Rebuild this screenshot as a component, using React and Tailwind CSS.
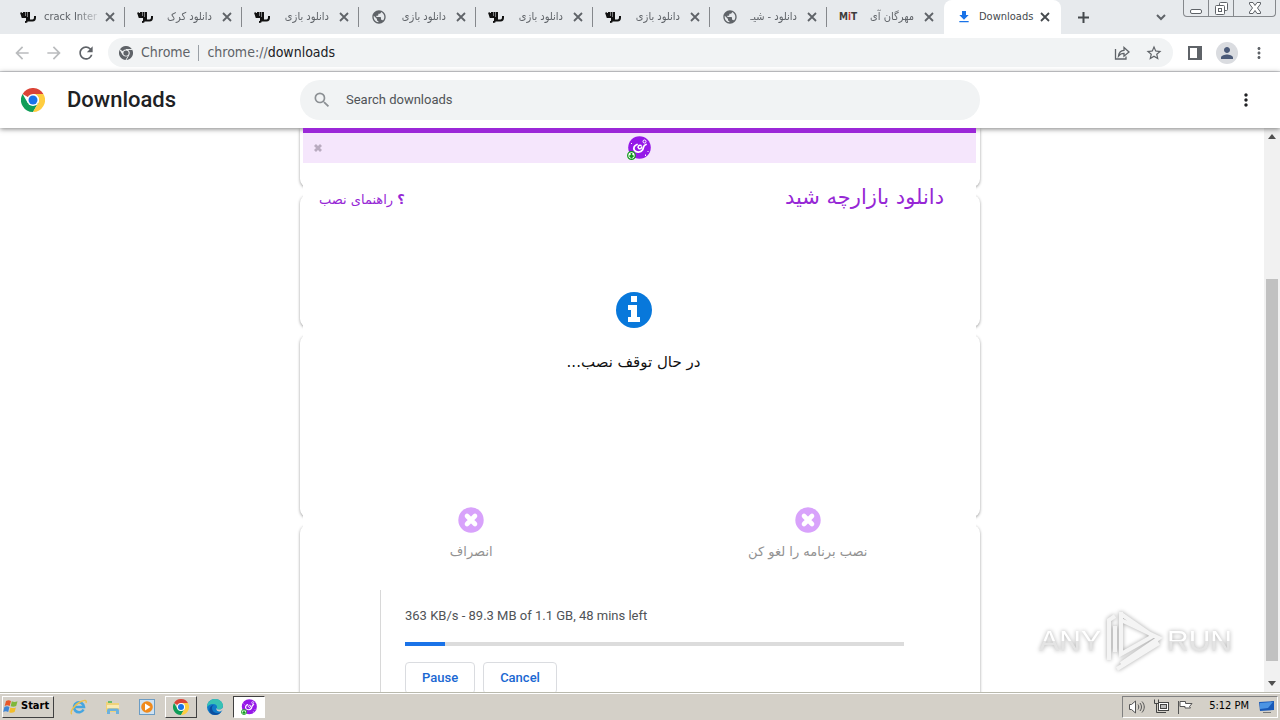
import React, { useState } from 'react';
import {
  MdArrowBack, MdArrowForward, MdFileDownload,
  MdMoreVert, MdPerson, MdPublic, MdRefresh, MdSearch, MdStarBorder
} from 'react-icons/md';

const TABS = [
  { id: 1, title: 'crack Inter', icon: 'site' },
  { id: 2, title: 'دانلود کرک', icon: 'site', rtl: true },
  { id: 3, title: 'دانلود بازی', icon: 'site', rtl: true },
  { id: 4, title: 'دانلود بازی', icon: 'globe', rtl: true },
  { id: 5, title: 'دانلود بازی', icon: 'site', rtl: true },
  { id: 6, title: 'دانلود بازی', icon: 'site', rtl: true },
  { id: 7, title: 'دانلود - شیـ', icon: 'globe', rtl: true },
  { id: 8, title: 'مهرگان آی', icon: 'mit', rtl: true },
];

function SiteIcon() {
  return (
    <svg viewBox="0 0 16 12" className="h-3 w-4" fill="none" stroke="#111" strokeWidth="2">
      <path d="M1 1.500l1.500 4.500h4V1M4 1v4M1.500 3h3M9 1v9.500" />
      <path d="M7 6v3.500c0 1-.6 1.500-2 1.500M10 9.500h2.500c1.600 0 2.500-1.200 2.500-3V5" />
    </svg>
  );
}

function Favicon({ type }) {
  if (type === 'globe') return <MdPublic size={16} className="text-[#5f6368]" />;
  if (type === 'mit') {
    return (
      <span className="w-4 text-[10px] leading-4 font-bold text-[#3c3c3c]">
        M<span className="text-[#d0352b]">i</span>T
      </span>
    );
  }
  return <SiteIcon />;
}

function CrossIcon() {
  return (
    <svg viewBox="0 0 14 14" className="h-3.5 w-3.5" fill="none" stroke="currentColor" strokeWidth="1.800">
      <path d="M3 3l8 8M11 3l-8 8" />
    </svg>
  );
}

function ChromeLogo({ className, mono }) {
  const c = mono ? ['#5f6368', '#5f6368', '#5f6368', '#5f6368'] : ['#db4437', '#0f9d58', '#ffcd40', '#1a73e8'];
  return (
    <svg viewBox="0 0 48 48" className={className}>
      <path d="M24 24L3.200 12A24 24 0 0 1 44.800 12L24 12z" fill={c[0]} />
      <path d="M3.200 12A24 24 0 0 0 24 48L34.400 30L24 24L13.600 30z" fill={c[1]} />
      <path d="M44.800 12A24 24 0 0 1 24 48L34.400 30A12 12 0 0 0 24 12z" fill={c[2]} />
      {mono && <path d="M24 12H45M13.600 30L3.200 12M34.400 30L24 48" stroke="#f1f3f4" strokeWidth="3" />}
      <circle cx="24" cy="24" r="12" fill={mono ? '#f1f3f4' : '#fff'} />
      <circle cx="24" cy="24" r="9" fill={c[3]} />
    </svg>
  );
}

function InstallerLogo({ className }) {
  return (
    <svg viewBox="0 0 24 24" className={className}>
      <circle cx="12.500" cy="11.500" r="11.300" fill="#9518e8" />
      <path d="M10 8.500c-2.800 1-4 3.500-2.500 5.800 1.800 2.600 6.200 2.400 8-.3 1.600-2.500.2-4.600 3.500-5.500" fill="none" stroke="#fff" strokeWidth="1.800" strokeLinecap="round" />
      <path d="M14 9.500c-2.500-.8-3.800 1.500-2.300 2.800 1 .8 2.800.4 3-1.300" fill="none" stroke="#fff" strokeWidth="1.500" strokeLinecap="round" />
      <circle cx="17.500" cy="5.500" r="1.500" fill="none" stroke="#fff" />
      <path d="M4 7l1 1M18.500 18.500v1.500M21 15v1" stroke="#fff" />
      <circle cx="4.500" cy="19.500" r="3.800" fill="#fff" stroke="#119c1b" strokeWidth="1.300" />
      <path d="M4.500 17v5M2.500 19.500l2 2 2-2" fill="none" stroke="#119c1b" strokeWidth="1.700" />
    </svg>
  );
}

function InfoIcon() {
  return (
    <svg viewBox="0 0 36 36" className="h-9 w-9">
      <circle cx="18" cy="18" r="18" fill="#0878db" />
      <path d="M15 4h6v6h-6zM12 13h9v12h3v5H12v-5h3v-7h-3z" fill="#fff" />
    </svg>
  );
}

function CancelIcon() {
  return (
    <svg viewBox="0 0 26 26" className="h-[26px] w-[26px]">
      <circle cx="13" cy="13" r="12.700" fill="#d8a2fb" />
      <path d="M9 9l8 8M17 9l-8 8" stroke="#fff" strokeWidth="4.600" strokeLinecap="round" />
    </svg>
  );
}

function WindowButtons() {
  return (
    <div className="mr-1 flex h-[17px] w-[93px] self-start rounded-b-[4px] border border-t-0 border-[#85888c] text-[#5f6368]">
      <button aria-label="Minimize" className="flex w-[25px] items-center justify-center border-r border-[#85888c]">
        <svg viewBox="0 0 12 12" className="mt-1 h-3 w-3"><rect x=".5" y="5.500" width="11" height="4" rx="1.500" fill="#fff" stroke="currentColor" /></svg>
      </button>
      <button aria-label="Restore" className="flex w-[25px] items-center justify-center border-r border-[#85888c]">
        <svg viewBox="0 0 13 13" className="h-[13px] w-[13px]" fill="#fff" stroke="currentColor">
          <rect x="4.500" y=".5" width="8" height="8" rx="1" />
          <rect x=".5" y="3.500" width="9" height="9" rx="1" />
          <rect x="3.500" y="6.500" width="3" height="3" />
        </svg>
      </button>
      <button aria-label="Close window" className="flex flex-1 items-center justify-center">
        <svg viewBox="0 0 12 12" className="h-3 w-3" fill="#fff" stroke="currentColor">
          <path d="M.5.500h3.500L6 3.500 8 .5h3.500v1.500L8.500 6l3 4v1.500H8L6 8.500 4 11.500H.5V10l3-4-3-4z" />
        </svg>
      </button>
    </div>
  );
}

function TabStrip() {
  return (
    <div className="flex h-[34px] shrink-0 items-center bg-[#e7eaed] pl-2 font-['DejaVu_Sans_Condensed','DejaVu_Sans',sans-serif]">
      {TABS.map((t, i) => (
        <div key={t.id} className="flex h-5 w-[117px] min-w-0 items-center pl-3">
          <Favicon type={t.icon} />
          <span
            dir={t.rtl ? 'rtl' : 'ltr'}
            className={`w-[67px] shrink-0 px-2 text-[11px] leading-5 whitespace-nowrap text-[#5f6368] ${
              t.rtl ? '[mask-image:linear-gradient(to_left,black_75%,transparent)]' : '[mask-image:linear-gradient(to_right,black_60%,transparent)]'
            }`}
          >
            {t.title}
          </span>
          <button aria-label="Close tab" className="shrink-0 text-[#5f6368]"><CrossIcon /></button>
          {i < TABS.length - 1 && <span className="ml-auto h-5 w-px bg-[#85888c]" />}
        </div>
      ))}
      <div className="flex h-full w-[117px] items-center rounded-t-lg bg-white pr-[9px] pl-3">
        <MdFileDownload size={16} className="text-[#1a73e8]" />
        <span className="ml-[7px] text-[11px] leading-5 whitespace-nowrap text-[#45494d]">Downloads</span>
        <button aria-label="Close tab" className="ml-auto text-[#45494d]"><CrossIcon /></button>
      </div>
      <button aria-label="New tab" className="ml-4 text-[#45494d]">
        <svg viewBox="0 0 13 13" className="h-[13px] w-[13px]" stroke="currentColor" strokeWidth="2"><path d="M6.500 1v11M1 6.500h11" /></svg>
      </button>
      <button aria-label="Search tabs" className="mr-4 ml-auto text-[#5f6368]">
        <svg viewBox="0 0 12 12" className="h-3 w-3" fill="none" stroke="currentColor" strokeWidth="2"><path d="M2 4l4 4 4-4" /></svg>
      </button>
      <WindowButtons />
    </div>
  );
}

function Toolbar() {
  return (
    <div className="flex h-[38px] shrink-0 items-center border-b border-[#d5d7da] bg-white pr-3 pl-3 text-[#5f6368]">
      <div className="flex items-center gap-3">
        <button aria-label="Back" className="text-[#babcbe]"><MdArrowBack size={20} /></button>
        <button aria-label="Forward" className="text-[#babcbe]"><MdArrowForward size={20} /></button>
        <button aria-label="Reload"><MdRefresh size={20} /></button>
      </div>
      <div className="ml-3 flex h-[29px] flex-1 items-center rounded-full bg-[#f1f3f4] pr-2.5 pl-[11px] font-['DejaVu_Sans_Condensed','DejaVu_Sans',sans-serif] text-[14px]">
        <ChromeLogo mono className="h-3.5 w-3.5" />
        <span className="ml-2">Chrome</span>
        <span className="mx-2 h-4 w-px bg-[#9aa0a6]" />
        <span>chrome://<span className="text-[#202124]">downloads</span></span>
        <button aria-label="Share" className="ml-auto">
          <svg viewBox="0 0 16 16" className="h-4 w-4" fill="none" stroke="currentColor" strokeWidth="1.300">
            <path d="M1.500 4v10h10.500v-2.500" />
            <path d="M4.500 11c.3-3.500 2.300-5.500 5.500-5.700V2.500L15 7l-5 4.200V8.400C7.500 8.400 5.800 9.200 4.500 11z" />
          </svg>
        </button>
        <button aria-label="Bookmark" className="ml-[15px]"><MdStarBorder size={18} /></button>
      </div>
      <button aria-label="Side panel" className="ml-[15px]">
        <svg viewBox="0 0 14 14" className="h-3.5 w-3.5"><path d="M1 1h12v12H1z" fill="none" stroke="currentColor" strokeWidth="2" /><path d="M9 0h5v14H9z" fill="currentColor" /></svg>
      </button>
      <button aria-label="Profile" className="ml-3.5 flex h-[22px] w-[22px] items-center justify-center rounded-full bg-[#dadce0] text-[#4b5a78]"><MdPerson size={18} /></button>
      <button aria-label="Menu" className="ml-3"><MdMoreVert size={18} /></button>
    </div>
  );
}

function PageHeader() {
  const [query, setQuery] = useState('');
  return (
    <header className="relative z-10 grid h-14 shrink-0 grid-cols-[1fr_680px_1fr] items-center bg-white shadow-[0_1px_5px_rgba(0,0,0,0.5)]">
      <div className="flex items-center gap-[22px] pl-[21px]">
        <ChromeLogo className="h-6 w-6" />
        <h1 className="font-[Roboto,sans-serif] text-[22px] leading-6 font-medium text-[#202124]">Downloads</h1>
      </div>
      <label className="flex h-10 items-center rounded-full bg-[#f1f3f4] pl-3">
        <MdSearch size={20} className="text-[#8c9094]" />
        <input
          value={query}
          onChange={(e) => setQuery(e.target.value)}
          placeholder="Search downloads"
          aria-label="Search downloads"
          className="ml-3.5 flex-1 bg-transparent font-[Roboto,sans-serif] text-[13px] outline-none placeholder:text-[#505357]"
        />
      </label>
      <button aria-label="More actions" className="mr-6 justify-self-end text-[#202124]"><MdMoreVert size={20} /></button>
    </header>
  );
}

function Installer() {
  return (
    <section className="absolute top-0 left-[3px] z-20 h-[462px] w-[673px] bg-white font-['DejaVu_Sans',sans-serif]">
      <div className="h-[5px] bg-[#9b27d8]" />
      <div className="grid h-[30px] grid-cols-3 items-center bg-[#f5e6fc]">
        <button aria-label="Close" className="ml-2.5 justify-self-start text-[#b9abc0]">
          <svg viewBox="0 0 10 10" className="h-2.5 w-2.5"><path d="M2 2l6 6M8 2L2 8" stroke="currentColor" strokeWidth="2.800" /></svg>
        </button>
        <InstallerLogo className="h-6 w-6 justify-self-center" />
      </div>
      <div dir="rtl" className="flex h-[70px] items-center justify-between pr-8 pl-4 text-[#9627d5]">
        <h2 className="text-[21px]">دانلود بازارچه شید</h2>
        <a href="#help" className="mt-1 text-[13px]"><b>؟</b> راهنمای نصب</a>
      </div>
      <div className="flex h-[274px] flex-col items-center pt-[59px] pr-3">
        <InfoIcon />
        <p dir="rtl" className="mt-5 text-[15px] leading-7 text-[#111]">در حال توقف نصب...</p>
      </div>
      <div className="grid grid-cols-2 text-[13px] leading-[22px] text-[#929292]">
        <button className="flex flex-col items-center gap-2">
          <CancelIcon />
          انصراف
        </button>
        <button className="flex flex-col items-center gap-2">
          <CancelIcon />
          نصب برنامه را لغو کن
        </button>
      </div>
    </section>
  );
}

function DownloadList() {
  const card = 'rounded-lg bg-white shadow-[0_1px_3px_rgba(0,0,0,0.4)]';
  return (
    <div className="relative flex w-[680px] flex-col gap-2">
      <div className={`h-[59px] rounded-t-none ${card}`} />
      <div className={`h-[132px] ${card}`} />
      <div className={`h-[182px] ${card}`} />
      <article className={`h-[230px] pl-20 ${card}`}>
        <div className="h-full border-l border-[#d8d8d8] pt-[81px] pr-[76px] pl-6 font-[Roboto,sans-serif] text-[13px]">
          <p className="leading-5 text-[#505357]">363 KB/s - 89.3 MB of 1.1 GB, 48 mins left</p>
          <div role="progressbar" aria-valuenow={8} className="mt-4 h-1 bg-[#dcdcdc]">
            <div className="h-full w-[8%] bg-[#1a73e8]" />
          </div>
          <div className="mt-4 flex gap-2 font-medium text-[#1967d2]">
            <button className="h-8 rounded border border-[#dadce0] px-4">Pause</button>
            <button className="h-8 rounded border border-[#dadce0] px-4">Cancel</button>
          </div>
        </div>
      </article>
      <Installer />
    </div>
  );
}

function Scrollbar() {
  return (
    <div className="flex w-4 shrink-0 flex-col items-center bg-[#f1f1f1] py-1.5 text-[#505050]">
      <svg viewBox="0 0 8 5" className="h-[5px] w-2"><path d="M0 5l4-5 4 5z" fill="currentColor" /></svg>
      <div className="mt-[140px] mb-5 w-3 flex-1 bg-[#c1c1c1]" />
      <svg viewBox="0 0 8 5" className="h-[5px] w-2"><path d="M0 0l4 5 4-5z" fill="currentColor" /></svg>
    </div>
  );
}

function Watermark() {
  const text = "bg-linear-to-b from-white from-50% to-[#e4e4e4] to-50% bg-clip-text font-['Liberation_Sans',sans-serif] text-[30px] leading-10 text-transparent";
  return (
    <div className="absolute right-12 bottom-5 flex items-center gap-1 drop-shadow-[0_0_2px_rgba(0,0,0,0.35)]">
      <span className={text}>ANY</span>
      <svg viewBox="0 0 58 62" className="h-[62px] w-[58px]" fill="none" stroke="#f4f4f4" strokeWidth="4">
        <path d="M4 50V10l6-4M10 42V16M16 2v42l32-18L16 4M16 10l38 18-38 26M12 59l42-26" />
      </svg>
      <span className={text}>RUN</span>
    </div>
  );
}

function WindowsFlag() {
  return (
    <svg viewBox="0 0 16 15" className="h-[15px] w-4">
      <path d="M3 2c2-1.200 3.500-1 5 0L6.700 7C5 6 3.500 6 1.700 7z" fill="#e8582a" />
      <path d="M8.800 2.300c2 1 3.500 1 5.700 0L13.200 7c-2 1-3.700 1-5.500.3z" fill="#7fb83a" />
      <path d="M1.400 8c2-1 3.500-.8 5 0L5.200 13c-1.700-1-3.200-1-5 0z" fill="#3f86d6" />
      <path d="M7.400 8.400c2 .9 3.500.9 5.500 0L11.600 13c-2 1-3.700 1-5.400.2z" fill="#f2bd2b" />
    </svg>
  );
}

function EdgeIcon() {
  return (
    <svg viewBox="0 0 16 16" className="h-4 w-4">
      <circle cx="8" cy="8" r="8" fill="#0f7bc9" />
      <path d="M0 8C0 3 4 0 8 0c5 0 8 3.500 8 6.500 0 2.500-2 4-4 4-1.500 0-2.500-.6-2-1.600C10.500 6.500 8.500 5 6 5 3 5 1 6.500 0 8z" fill="#37c2b4" />
      <path d="M10 8.900c-.5 1 .5 1.600 2 1.600 1.700 0 3.200-.9 3.800-2.300L16 11l-3 1.500c-2 .3-4-1-3.600-3z" fill="#d4d0c8" />
      <path d="M5 9c0 3 2.500 5 5.500 5 1.500 0 3-.5 4-1.500C13 15 10.500 16 8 16c-4 0-6-3-5.500-6C3 7.500 5 6 7 6 5.500 6.500 5 8 5 9z" fill="#0c4fa0" />
    </svg>
  );
}

function Taskbar() {
  return (
    <footer className="flex h-7 shrink-0 items-center border-t border-[#b9b9ad] bg-[#d4d0c8] px-0.5 font-['DejaVu_Sans_Condensed','DejaVu_Sans',sans-serif] shadow-[inset_0_1px_0_#fff]">
      <button className="flex h-[22px] w-[52px] items-center gap-0.5 border border-t-white border-r-[#404040] border-b-[#404040] border-l-white text-[11px] font-bold text-black">
        <WindowsFlag />
        Start
      </button>
      <div className="ml-2 flex items-center">
        <button aria-label="Internet Explorer" className="flex w-[34px] justify-center">
          <svg viewBox="0 0 18 16" className="h-4 w-[18px]" fill="none">
            <path d="M13.500 10.500A5 5 0 1 1 14 8H5" stroke="#45a5e0" strokeWidth="2.600" />
            <path d="M2 15c-3-1 2-9 8-12 5-2.500 7-2 6 1" stroke="#ecc04c" strokeWidth="1.400" />
          </svg>
        </button>
        <button aria-label="Explorer" className="flex w-[34px] justify-center">
          <svg viewBox="0 0 16 16" className="h-4 w-4">
            <path d="M1 3h5l1 1h7v9H1z" fill="#efd27a" />
            <path d="M3 2h4v2H3z" fill="#6dbb6a" />
            <path d="M2 6h12v3H2z" fill="#f9eab2" />
            <path d="M2 15v-3c0-2 1-2.500 3-2.500h6c2 0 3 .5 3 2.500v3h-3v-3H5v3z" fill="#6db1dd" />
          </svg>
        </button>
        <button aria-label="Media Player" className="flex w-[34px] justify-center">
          <svg viewBox="0 0 16 16" className="h-4 w-4">
            <rect x=".5" y=".5" width="15" height="15" fill="#cfe2f2" stroke="#6b9cc4" />
            <circle cx="8" cy="8" r="5.800" fill="#f08a1c" />
            <path d="M6 4.500v7L11.500 8z" fill="#fff" />
          </svg>
        </button>
        <button aria-label="Chrome" className="mx-px flex h-[22px] w-8 items-center justify-center border border-t-white border-r-[#404040] border-b-[#404040] border-l-white">
          <ChromeLogo className="h-4 w-4" />
        </button>
        <button aria-label="Edge" className="flex w-[34px] justify-center"><EdgeIcon /></button>
        <button aria-label="Installer" className="mx-px flex h-[22px] w-8 items-center justify-center border border-t-[#404040] border-r-white border-b-white border-l-[#404040] bg-white">
          <InstallerLogo className="h-4 w-4" />
        </button>
      </div>
      <div className="ml-auto flex h-[22px] items-center gap-2 border border-t-[#808080] border-r-white border-b-white border-l-[#808080] pr-0.5 pl-1.5 text-[11px] text-black">
        <svg viewBox="0 0 16 14" className="h-3.5 w-4" fill="#fff" stroke="#555">
          <path d="M.5 4.500h2l4-3.500v12l-4-3.500h-2z" />
          <path d="M9 4.500c1 1.500 1 3.500 0 5M11 3c2 2.500 2 5.500 0 8M13 1.500c3 3.500 3 7.500 0 11" fill="none" />
        </svg>
        <svg viewBox="0 0 16 15" className="h-[15px] w-4" fill="#fff" stroke="#444">
          <rect x="5.500" y="3.500" width="10" height="8" />
          <rect x="7.500" y="5.500" width="6" height="4" fill="#bbb" />
          <path d="M1.500.500v4h4v-4M3.500 4.500v9h9M8 13.500h5" fill="none" />
        </svg>
        <svg viewBox="0 0 16 14" className="h-3.5 w-4" fill="#fff" stroke="#555">
          <path d="M1.500 1v13M3 1.500h5.500v2H15l-2.500 3 1 1.500H8v-1.500H3z" />
        </svg>
        <time className="ml-2 mr-0.5">5:12 PM</time>
        <svg viewBox="0 0 16 14" className="h-3.5 w-4">
          <path d="M0 2l15-1v9L1 11z" fill="#1859b8" />
          <path d="M1 3l13-1-5 6-8 1z" fill="#4b94e4" />
          <path d="M4 12h8v1H4z" fill="#777" />
        </svg>
      </div>
    </footer>
  );
}

export default function App() {
  return (
    <div className="flex h-screen flex-col overflow-hidden bg-white">
      <TabStrip />
      <Toolbar />
      <PageHeader />
      {/* the installer window floats above the downloads page and its header shadow */}
      <main className="relative flex min-h-0 flex-1 overflow-hidden">
        <div className="flex flex-1 items-start justify-center pl-4">
          <DownloadList />
        </div>
        <Scrollbar />
        <Watermark />
      </main>
      <Taskbar />
    </div>
  );
}
